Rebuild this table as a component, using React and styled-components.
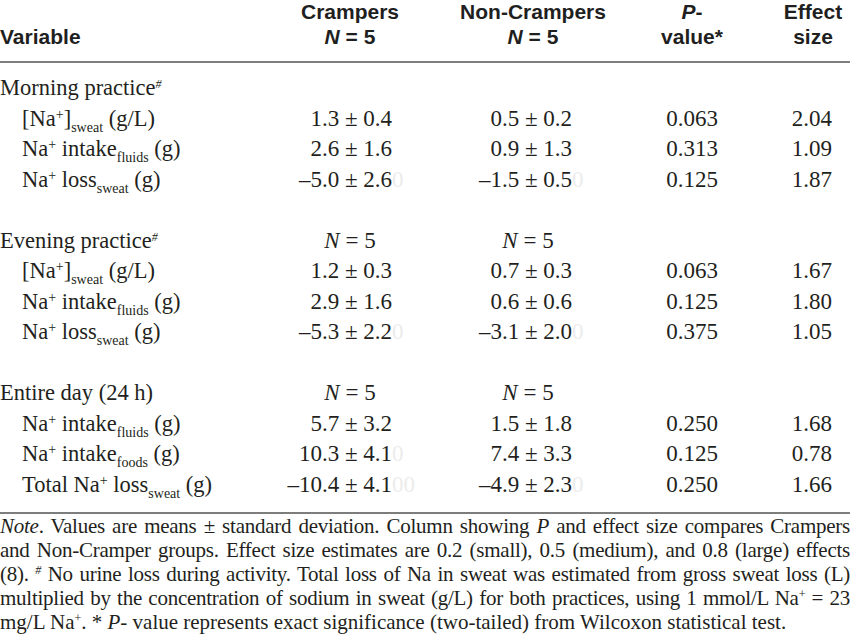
import React from 'react';
import styled, { createGlobalStyle } from 'styled-components';

const Global = createGlobalStyle`
  html, body { margin: 0; padding: 0; background: #fff; }
  body { width: 850px; height: 635px; overflow: hidden; }
`;

const COLS = '270px 160px 206px 144px 70px';

const Page = styled.div`
  width: 850px;
  color: #231f20;
  font-family: "Liberation Serif", "Times New Roman", serif;
  font-size: 22.5px;
`;

const HeaderRow = styled.div`
  display: grid;
  grid-template-columns: ${COLS};
  align-items: end;
  font-family: "Liberation Sans", Arial, sans-serif;
  font-weight: bold;
  font-size: 21px;
  line-height: 25px;
  margin-top: -1px;
  padding-bottom: 12px;
  color: #1f1f1f;
`;

const HeadCell = styled.div`
  text-align: ${(p) => p.$align || 'center'};
  padding-right: ${(p) => p.$pr || 0}px;
`;

const Rule = styled.div`
  height: 2px;
  background: #7d7d7d;
`;

const Body = styled.div`
  padding: 10px 0 12px;
`;

const Row = styled.div`
  display: grid;
  grid-template-columns: ${COLS};
  height: 30.5px;
  line-height: 30.5px;
  white-space: nowrap;
`;

const Label = styled.div`
  padding-left: ${(p) => (p.$indent ? 22 : 0)}px;
`;

const Cell = styled.div`
  font-size: 23px;
  text-align: ${(p) => p.$align};
  padding-right: ${(p) => p.$pr}px;
`;

const Sup = styled.sup`
  font-size: ${(p) => p.$size || 14}px;
  line-height: 0;
  vertical-align: 7px;
  font-style: ${(p) => (p.$italic ? 'italic' : 'normal')};
`;

const Sub = styled.sub`
  font-size: 14px;
  line-height: 0;
  vertical-align: -6px;
`;

const Ghost = styled.span`
  display: inline-block;
  width: 0;
  overflow: visible;
  color: #ececec;
`;

const I = styled.i`
  font-style: italic;
`;

const Foot = styled.div`
  font-size: 21px;
  line-height: 24px;
`;

const FootLine = styled.div`
  text-align: ${(p) => (p.$last ? 'left' : 'justify')};
  text-align-last: ${(p) => (p.$last ? 'left' : 'justify')};
  letter-spacing: ${(p) => (p.$last ? '0' : '-0.25px')};
`;

const NaP = ({ size }) => (
  <>
    Na<Sup $size={size}>+</Sup>
  </>
);

const colCfg = [
  { align: 'right', pr: 38 },
  { align: 'right', pr: 64 },
  { align: 'center', pr: 32 },
  { align: 'right', pr: 18 },
];
const nCfg = [
  { align: 'center', pr: 0 },
  { align: 'center', pr: 10 },
];

const N5 = () => (
  <>
    <I>N</I> = 5
  </>
);

const sections = [
  {
    title: (
      <>
        Morning practice<Sup $italic $size={12}>#</Sup>
      </>
    ),
    n: false,
    rows: [
      {
        label: (
          <>
            [<NaP />]<Sub>sweat</Sub> (g/L)
          </>
        ),
        v: ['1.3 ± 0.4', '0.5 ± 0.2', '0.063', '2.04'],
      },
      {
        label: (
          <>
            <NaP /> intake<Sub>fluids</Sub> (g)
          </>
        ),
        v: ['2.6 ± 1.6', '0.9 ± 1.3', '0.313', '1.09'],
      },
      {
        label: (
          <>
            <NaP /> loss<Sub>sweat</Sub> (g)
          </>
        ),
        v: ['–5.0 ± 2.6', '–1.5 ± 0.5', '0.125', '1.87'],
        g: ['0', '0'],
      },
    ],
  },
  {
    title: (
      <>
        Evening practice<Sup $italic $size={12}>#</Sup>
      </>
    ),
    n: true,
    rows: [
      {
        label: (
          <>
            [<NaP />]<Sub>sweat</Sub> (g/L)
          </>
        ),
        v: ['1.2 ± 0.3', '0.7 ± 0.3', '0.063', '1.67'],
      },
      {
        label: (
          <>
            <NaP /> intake<Sub>fluids</Sub> (g)
          </>
        ),
        v: ['2.9 ± 1.6', '0.6 ± 0.6', '0.125', '1.80'],
      },
      {
        label: (
          <>
            <NaP /> loss<Sub>sweat</Sub> (g)
          </>
        ),
        v: ['–5.3 ± 2.2', '–3.1 ± 2.0', '0.375', '1.05'],
        g: ['0', '0'],
      },
    ],
  },
  {
    title: <>Entire day (24 h)</>,
    n: true,
    rows: [
      {
        label: (
          <>
            <NaP /> intake<Sub>fluids</Sub> (g)
          </>
        ),
        v: ['5.7 ± 3.2', '1.5 ± 1.8', '0.250', '1.68'],
      },
      {
        label: (
          <>
            <NaP /> intake<Sub>foods</Sub> (g)
          </>
        ),
        v: ['10.3 ± 4.1', '7.4 ± 3.3', '0.125', '0.78'],
        g: ['0', ''],
      },
      {
        label: (
          <>
            Total <NaP /> loss<Sub>sweat</Sub> (g)
          </>
        ),
        v: ['–10.4 ± 4.1', '–4.9 ± 2.3', '0.250', '1.66'],
        g: ['00', '0'],
      },
    ],
  },
];

const Spacer = styled.div`
  height: 30.5px;
`;

export default function App() {
  return (
    <Page>
      <Global />
      <HeaderRow>
        <HeadCell $align="left">Variable</HeadCell>
        <HeadCell>
          Crampers
          <br />
          <I>N</I> = 5
        </HeadCell>
        <HeadCell>
          Non-Crampers
          <br />
          <I>N</I> = 5
        </HeadCell>
        <HeadCell $pr={32}>
          <I>P</I>-
          <br />
          value*
        </HeadCell>
        <HeadCell $pr={4}>
          Effect
          <br />
          size
        </HeadCell>
      </HeaderRow>
      <Rule />
      <Body>
        {sections.map((s, si) => (
          <React.Fragment key={si}>
            {si > 0 && <Spacer />}
            <Row>
              <Label>{s.title}</Label>
              {s.n ? (
                <>
                  <Cell $align={nCfg[0].align} $pr={nCfg[0].pr}>
                    <N5 />
                  </Cell>
                  <Cell $align={nCfg[1].align} $pr={nCfg[1].pr}>
                    <N5 />
                  </Cell>
                </>
              ) : null}
            </Row>
            {s.rows.map((r, ri) => (
              <Row key={ri}>
                <Label $indent>{r.label}</Label>
                {r.v.map((val, vi) => (
                  <Cell key={vi} $align={colCfg[vi].align} $pr={colCfg[vi].pr}>
                    {val}
                    {r.g && r.g[vi] ? <Ghost>{r.g[vi]}</Ghost> : null}
                  </Cell>
                ))}
              </Row>
            ))}
          </React.Fragment>
        ))}
      </Body>
      <Rule />
      <Foot>
        <FootLine>
          <I>Note</I>. Values are means ± standard deviation. Column showing <I>P</I> and effect size compares Crampers
        </FootLine>
        <FootLine>
          and Non-Cramper groups. Effect size estimates are 0.2 (small), 0.5 (medium), and 0.8 (large) effects
        </FootLine>
        <FootLine>
          (8). <Sup $italic $size={12}>#</Sup> No urine loss during activity. Total loss of Na in sweat was estimated from gross sweat loss (L)
        </FootLine>
        <FootLine>
          multiplied by the concentration of sodium in sweat (g/L) for both practices, using 1 mmol/L <NaP size={12} /> = 23
        </FootLine>
        <FootLine $last>
          mg/L <NaP size={12} />. * <I>P</I>- value represents exact significance (two-tailed) from Wilcoxon statistical test.
        </FootLine>
      </Foot>
    </Page>
  );
}
